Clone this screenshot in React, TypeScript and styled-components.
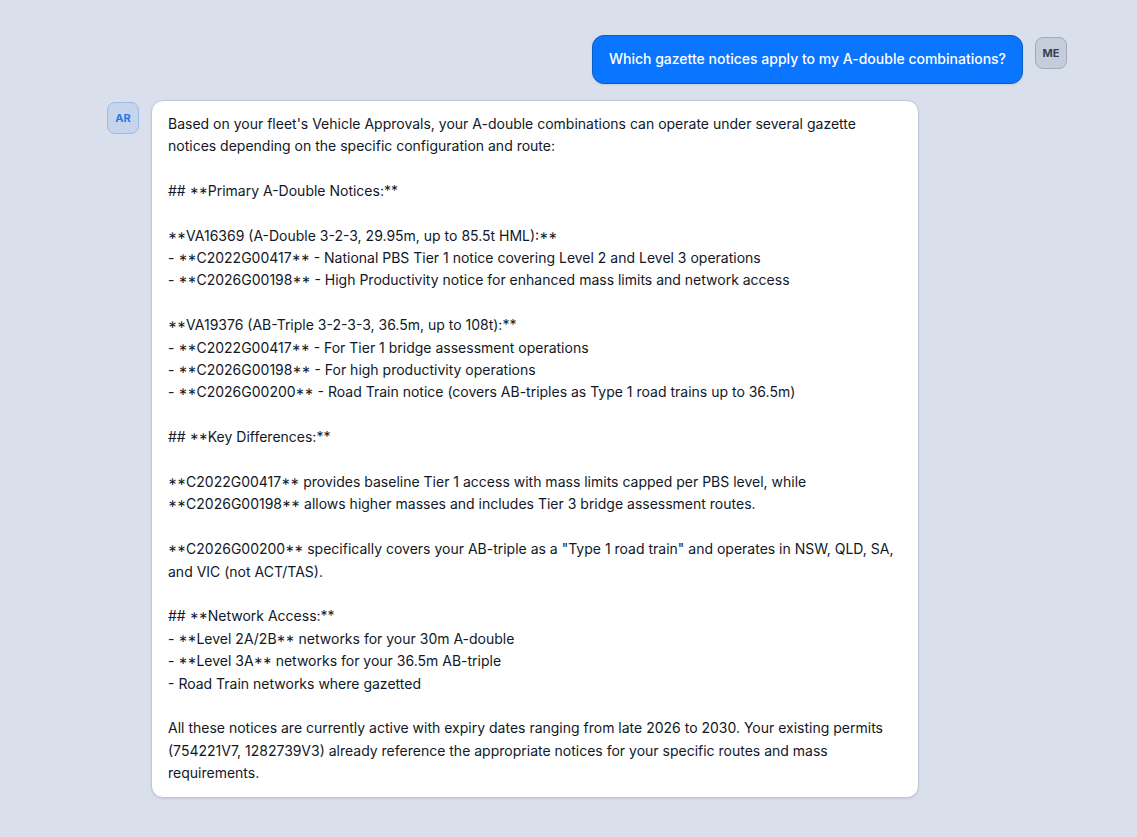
import React from "react";
import styled, { createGlobalStyle } from "styled-components";

const GlobalStyle = createGlobalStyle`
  * {
    box-sizing: border-box;
  }

  body {
    margin: 0;
    background: #d9e0eb;
    font-family: Inter, "Liberation Sans", sans-serif;
  }
`;

const Chat = styled.main`
  width: 960px;
  min-height: 837px;
  margin-left: 107px;
  padding-top: 35.12px;
  display: flex;
  flex-direction: column;
  gap: 16px;
`;

const Row = styled.div<{ $own?: boolean }>`
  display: flex;
  flex-direction: ${({ $own }) => ($own ? "row-reverse" : "row")};
  align-items: flex-start;
  gap: 12px;
`;

const Avatar = styled.div<{ $own?: boolean }>`
  width: 32px;
  height: 32px;
  margin-top: 2px;
  flex-shrink: 0;
  display: flex;
  align-items: center;
  justify-content: center;
  border: 1px solid ${({ $own }) => ($own ? "#a0aaba" : "#9db9e6")};
  border-radius: 8px;
  background: ${({ $own }) => ($own ? "#c5cdda" : "#c5d5ec")};
  color: ${({ $own }) => ($own ? "#374151" : "#2577ea")};
  font-size: 11px;
  font-weight: 700;
`;

const Bubble = styled.div<{ $own?: boolean }>`
  max-width: 768px;
  padding: 12px 16px;
  border: 1px solid ${({ $own }) => ($own ? "#0a5cc8" : "#bcc7d8")};
  border-radius: 12px;
  background: ${({ $own }) => ($own ? "#0a75ff" : "#ffffff")};
  color: ${({ $own }) => ($own ? "#ffffff" : "#111827")};
  font-size: 14px;
  font-weight: ${({ $own }) => ($own ? 500 : 400)};
  line-height: 22.4px;
  white-space: pre-wrap;
  box-shadow: 0 1px 2px rgba(15, 23, 42, 0.1);
`;

const Asterisks = styled.span`
  font-feature-settings: "case" 1;
`;

interface Message {
  id: number;
  author: string;
  own?: boolean;
  text: string;
}

const messages: Message[] = [
  {
    id: 1,
    author: "ME",
    own: true,
    text: "Which gazette notices apply to my A-double combinations?",
  },
  {
    id: 2,
    author: "AR",
    text: `Based on your fleet's Vehicle Approvals, your A-double combinations can operate under several gazette notices depending on the specific configuration and route:

## **Primary A-Double Notices:**

**VA16369 (A-Double 3-2-3, 29.95m, up to 85.5t HML):**
- **C2022G00417** - National PBS Tier 1 notice covering Level 2 and Level 3 operations
- **C2026G00198** - High Productivity notice for enhanced mass limits and network access

**VA19376 (AB-Triple 3-2-3-3, 36.5m, up to 108t):**
- **C2022G00417** - For Tier 1 bridge assessment operations
- **C2026G00198** - For high productivity operations
- **C2026G00200** - Road Train notice (covers AB-triples as Type 1 road trains up to 36.5m)

## **Key Differences:**

**C2022G00417** provides baseline Tier 1 access with mass limits capped per PBS level, while **C2026G00198** allows higher masses and includes Tier 3 bridge assessment routes.

**C2026G00200** specifically covers your AB-triple as a "Type 1 road train" and operates in NSW, QLD, SA, and VIC (not ACT/TAS).

## **Network Access:**
- **Level 2A/2B** networks for your 30m A-double
- **Level 3A** networks for your 36.5m AB-triple
- Road Train networks where gazetted

All these notices are currently active with expiry dates ranging from late 2026 to 2030. Your existing permits (754221V7, 1282739V3) already reference the appropriate notices for your specific routes and mass requirements.`,
  },
];

// Asterisks next to capitals and digits sit at cap-centre height; after "s:" or "t):" they stay raised.
const renderText = (text: string) =>
  text
    .split(/((?<![a-z]\)?:)\*\*)/)
    .map((part, index) => (part === "**" ? <Asterisks key={index}>{part}</Asterisks> : part));

const App = () => {
  return (
    <>
      <GlobalStyle />
      <Chat>
        {messages.map((message) => (
          <Row key={message.id} $own={message.own}>
            <Avatar $own={message.own}>{message.author}</Avatar>
            <Bubble $own={message.own}>{renderText(message.text)}</Bubble>
          </Row>
        ))}
      </Chat>
    </>
  );
};

export default App;
